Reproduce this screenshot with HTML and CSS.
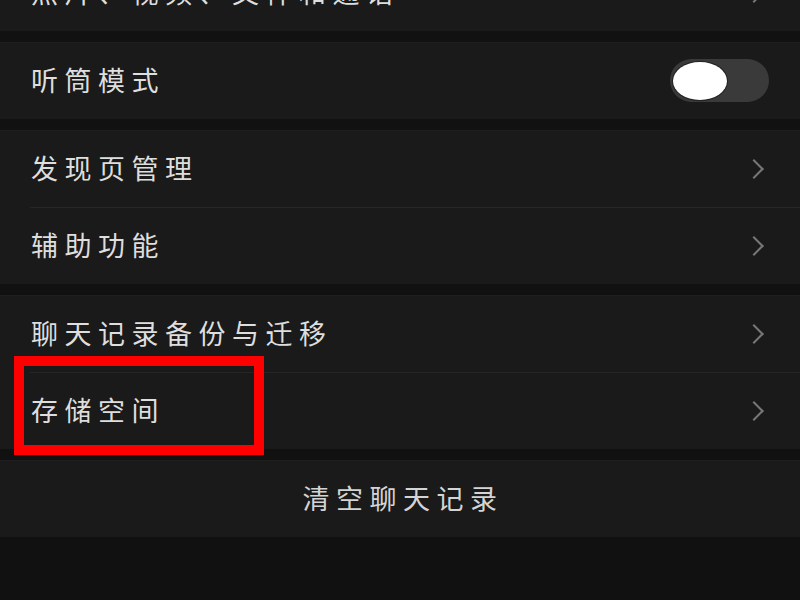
FILE: index.html
```html
<!DOCTYPE html>
<html>
<head>
    <meta charset="UTF-8">
    <meta name="viewport" content="width=device-width, initial-scale=1.0">
    <link rel="stylesheet" href="styles.css">
</head>
<body>
    <!-- 顶部被截断的一行 -->
    <div class="group group-top">
        <div class="row">
            <span class="label">照片、视频、文件和通话</span>
            <span class="arrow"></span>
        </div>
    </div>

    <div class="group">
        <div class="row">
            <span class="label">听筒模式</span>
            <div class="switch"><div class="knob"></div></div>
        </div>
    </div>

    <div class="group">
        <div class="row">
            <span class="label">发现页管理</span>
            <span class="arrow"></span>
        </div>
        <div class="row">
            <span class="label">辅助功能</span>
            <span class="arrow"></span>
        </div>
    </div>

    <div class="group">
        <div class="row">
            <span class="label">聊天记录备份与迁移</span>
            <span class="arrow"></span>
        </div>
        <div class="row marked">
            <span class="label">存储空间</span>
            <span class="arrow"></span>
            <div class="mark"></div>
        </div>
    </div>

    <div class="group">
        <div class="row center">
            <span class="label">清空聊天记录</span>
        </div>
    </div>
</body>
</html>
```

FILE: styles.css
```css
body {
    margin: 0;
    background-color: #111111;
    font-family: 'Noto Sans CJK SC', 'Noto Sans', sans-serif;
    overflow: hidden;
    height: 600px;
}
.group {
    background-color: #1a1a1a;
    margin-top: 11px;
    box-shadow: inset 0 1px 0 #1f1f1f;
}
.group-top {
    margin-top: -46px;
}
.row {
    position: relative;
    height: 77px;
    box-sizing: border-box;
    display: flex;
    align-items: center;
    justify-content: space-between;
    padding: 0 35px 0 31px;
}
.row + .row::before {
    content: '';
    position: absolute;
    top: 0;
    left: 30px;
    right: 0;
    border-top: 1px solid #262626;
}
.label {
    color: #dedede;
    font-size: 27px;
    letter-spacing: 6.5px;
    line-height: 1;
    margin-top: -2px;
}
.center {
    justify-content: center;
    padding: 0 0 0 6px;
}
.center .label {
    color: #d4d4d4;
}
.arrow {
    width: 12px;
    height: 12px;
    border-top: 2px solid #777777;
    border-right: 2px solid #777777;
    transform: rotate(45deg);
    margin-right: 4px;
}
.switch {
    width: 99px;
    height: 43px;
    border-radius: 22px;
    background-color: #3a3a3a;
    display: flex;
    align-items: center;
    padding-left: 3px;
    box-sizing: border-box;
    margin-right: -4px;
}
.knob {
    width: 54px;
    height: 38px;
    border-radius: 50%;
    background-color: #ffffff;
    box-shadow: 0 0 0 1px #222;
}
.mark {
    position: absolute;
    top: -16px;
    left: 14px;
    width: 250px;
    height: 99px;
    box-sizing: border-box;
    border: 10px solid #ff0000;
}
```
